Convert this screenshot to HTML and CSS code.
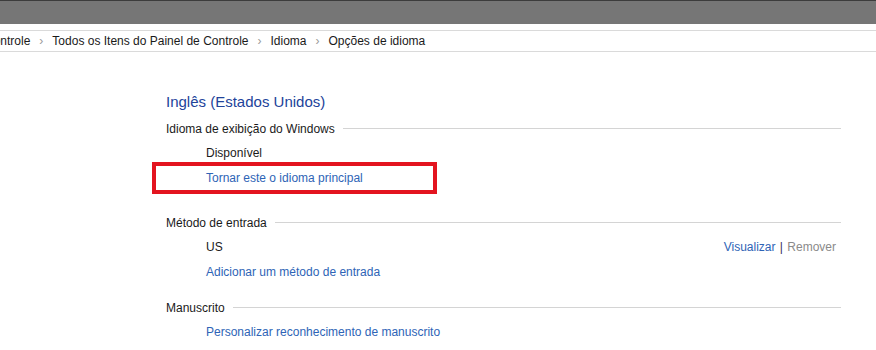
FILE: index.html
```html
<!DOCTYPE html>
<html>
<head>
    <title>Opções de idioma</title>
    <link rel="stylesheet" href="styles.css">
</head>
<body>
    <div class="titlebar"></div>

    <div class="addressbar">
        <div class="crumbs">
            <span>Controle</span>
            <span class="sep">&#8250;</span>
            <span>Todos os Itens do Painel de Controle</span>
            <span class="sep">&#8250;</span>
            <span>Idioma</span>
            <span class="sep">&#8250;</span>
            <span>Opções de idioma</span>
        </div>
    </div>

    <div class="content">
        <h1 class="lang-title">Inglês (Estados Unidos)</h1>

        <div class="section display-section">
            <div class="section-head">
                <span>Idioma de exibição do Windows</span>
                <div class="rule"></div>
            </div>
            <div class="row">Disponível</div>
            <div class="row highlight">
                <a class="link">Tornar este o idioma principal</a>
            </div>
        </div>

        <div class="section input-section">
            <div class="section-head">
                <span>Método de entrada</span>
                <div class="rule"></div>
            </div>
            <div class="row split">
                <span>US</span>
                <span class="actions">
                    <a class="link">Visualizar</a>
                    <span class="bar">|</span>
                    <span class="disabled">Remover</span>
                </span>
            </div>
            <div class="row"><a class="link">Adicionar um método de entrada</a></div>
        </div>

        <div class="section">
            <div class="section-head">
                <span>Manuscrito</span>
                <div class="rule"></div>
            </div>
            <div class="row"><a class="link">Personalizar reconhecimento de manuscrito</a></div>
        </div>
    </div>
</body>
</html>
```

FILE: styles.css
```css
*, *::before {
    margin: 0;
    padding: 0;
    box-sizing: border-box;
}

body {
    background-color: #ffffff;
    font-family: "Liberation Sans", Arial, sans-serif;
    font-size: 12px;
    color: #1a1a1a;
    overflow: hidden;
}

.titlebar {
    height: 24px;
    background-color: #767676;
    border-top: 1px solid #3c3c3c;
}

.addressbar {
    margin-top: 6px;
    height: 22px;
    border-top: 1px solid #dadada;
    border-bottom: 1px solid #dadada;
    overflow: hidden;
    white-space: nowrap;
}

.crumbs {
    display: flex;
    align-items: center;
    height: 20px;
    margin-left: -15px;
    color: #1a1a1a;
}

.crumbs .sep {
    color: #9a9a9a;
    font-size: 12px;
    padding: 0 9px 0 9px;
}

.content {
    width: 841px;
    padding-left: 166px;
    padding-top: 38px;
}

.lang-title {
    font-size: 15px;
    font-weight: normal;
    color: #22439a;
    line-height: 24px;
}

.section-head {
    display: flex;
    align-items: center;
    height: 25px;
}

.section-head .rule {
    flex: 1;
    height: 1px;
    background-color: #d4d4d4;
    margin-left: 8px;
}

.row {
    height: 25px;
    line-height: 25px;
    padding-left: 40px;
}

.display-section {
    margin-top: 2px;
}

.input-section {
    margin-top: 19px;
}

.input-section + .section {
    margin-top: 10px;
}

.highlight {
    position: relative;
}

.highlight::before {
    content: "";
    position: absolute;
    left: -14px;
    top: -4px;
    width: 285px;
    height: 32px;
    border: 4px solid #e3141f;
}

.split {
    display: flex;
    justify-content: space-between;
    padding-right: 5px;
}

.link {
    color: #2e64b6;
}

.actions .bar {
    color: #3a2d5a;
    padding: 0 1px;
}

.actions .disabled {
    color: #8a8a8a;
}
```
